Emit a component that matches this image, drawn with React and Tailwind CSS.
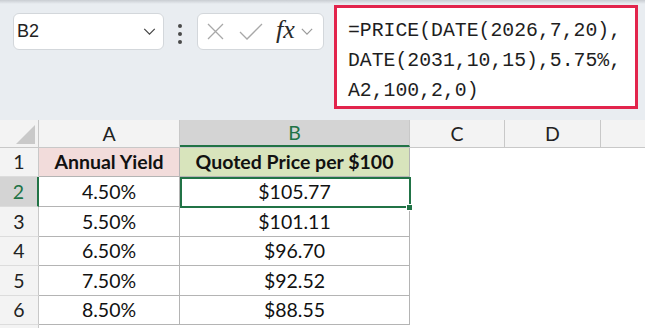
import React from 'react';

const ROWS = [
  { n: 1, a: 'Annual Yield', b: 'Quoted Price per $100', h: 'h-[29px]', head: true },
  { n: 2, a: '4.50%', b: '$105.77', h: 'h-[30px]', active: true },
  { n: 3, a: '5.50%', b: '$101.11', h: 'h-[30px]' },
  { n: 4, a: '6.50%', b: '$96.70', h: 'h-[29px]' },
  { n: 5, a: '7.50%', b: '$92.52', h: 'h-[30px]' },
  { n: 6, a: '8.50%', b: '$88.55', h: 'h-[29px]' },
];

function Chevron({ className }) {
  return (
    <svg viewBox="0 0 14 8" className={className} fill="none" stroke="currentColor" strokeWidth="1.4">
      <path d="M1 1l6 6 6-6" />
    </svg>
  );
}

function Toolbar() {
  return (
    <div className="relative h-[120px] bg-[#e9edf1] flex items-start">
      {/* faint shadow from the ribbon above */}
      <div className="absolute top-0 left-0 right-0 h-[4px] bg-gradient-to-b from-[#c9cdd2] to-[#e9edf1]" />

      {/* name box */}
      <div className="mt-[13px] ml-[13px] w-[151px] h-[37px] bg-white border border-[#d3d7db] rounded-[6px] flex items-center pl-[3px] pr-[7px]">
        <span className="flex-1 text-[18px] text-[#222] font-['Liberation_Sans',sans-serif]">B2</span>
        <Chevron className="w-[13px] h-[7px] text-[#444]" />
      </div>

      {/* more dots */}
      <div className="mt-[24px] ml-[13px] w-[6px] flex flex-col items-center gap-[4px]">
        <span className="w-[4px] h-[4px] rounded-full bg-[#4a4a4a]" />
        <span className="w-[4px] h-[4px] rounded-full bg-[#4a4a4a]" />
        <span className="w-[4px] h-[4px] rounded-full bg-[#4a4a4a]" />
      </div>

      {/* cancel / enter / fx */}
      <div className="mt-[13px] ml-[14px] w-[127px] h-[37px] bg-white border border-[#d3d7db] rounded-[6px] flex items-center pl-[9px]">
        <svg viewBox="0 0 17 17" className="w-[17px] h-[17px]" fill="none" stroke="#a8a8a8" strokeWidth="1.3">
          <path d="M1 1l15 15M16 1L1 16" />
        </svg>
        <svg viewBox="0 0 24 17" className="ml-[15px] w-[24px] h-[17px]" fill="none" stroke="#a8a8a8" strokeWidth="1.3">
          <path d="M1 9l7 7L23 1" />
        </svg>
        <span className="ml-[13px] text-[26px] leading-none italic text-[#2a2a2a] font-['Liberation_Serif',serif] -mt-[3px]">fx</span>
        <Chevron className="ml-[6px] w-[12px] h-[7px] text-[#9a9a9a]" />
      </div>

      {/* formula box */}
      <div className="mt-[5px] ml-[10px] w-[304px] h-[104px] bg-white border-[3px] border-[#e2244c] pl-[11px] pt-[8px] font-['Liberation_Mono',monospace] text-[19.8px] leading-[30px] text-[#1e1e1e]">
        <div>=PRICE(DATE(2026,7,20),</div>
        <div>DATE(2031,10,15),5.75%,</div>
        <div>A2,100,2,0)</div>
      </div>
    </div>
  );
}

function Sheet() {
  const cell = "flex items-center justify-center";
  return (
    <div className="relative font-['Lato',sans-serif] text-[19.5px] text-[#111]">
      {/* column headers */}
      <div className="flex h-[28px] bg-[#f3f3f3] border-b border-[#c8c8c8] text-[#222]">
        <div className="w-[39px] relative border-r border-[#c8c8c8]">
          <svg viewBox="0 0 20 20" className="absolute left-[16px] top-[5px] w-[19px] h-[19px]">
            <polygon points="20,0 20,20 0,20" fill="#c9c9c9" />
          </svg>
        </div>
        <div className={`w-[141px] border-r border-[#c8c8c8] ${cell}`}>A</div>
        <div className={`w-[230px] border-r border-[#c8c8c8] bg-[#d4d4d4] text-[#217346] border-b-2 border-b-[#217346] ${cell}`}>B</div>
        <div className={`w-[95px] border-r border-[#c8c8c8] ${cell}`}>C</div>
        <div className={`w-[96px] border-r border-[#c8c8c8] ${cell}`}>D</div>
        <div className="flex-1" />
      </div>

      {ROWS.map((r) => (
        <div key={r.n} className={`flex ${r.h}`}>
          <div className={`w-[39px] border-b border-[#dcdcdc] ${cell} ${r.active ? 'bg-[#d4d4d4] text-[#217346] border-r-2 border-r-[#217346]' : 'bg-[#f3f3f3] text-[#222] border-r border-r-[#c8c8c8]'}`}>
            {r.n}
          </div>
          <div className={`w-[141px] border-r border-b border-[#b4b4b4] ${cell} ${r.head ? 'bg-[#f2dcdb] font-bold' : 'bg-white'}`}>
            {r.a}
          </div>
          <div className={`w-[230px] border-r border-b border-[#b4b4b4] ${cell} ${r.head ? 'bg-[#d8e4bc] font-bold' : 'bg-white'}`}>
            {r.b}
          </div>
          <div className="flex-1 bg-white" />
        </div>
      ))}

      <div className="flex h-[10px]">
        <div className="w-[39px] bg-[#f3f3f3] border-r border-[#c8c8c8]" />
        <div className="flex-1 bg-white" />
      </div>

      {/* active cell B2 */}
      <div className="absolute left-[180px] top-[57px] w-[231px] h-[31px] border-2 border-[#217346] pointer-events-none" />
      <div className="absolute left-[406px] top-[84px] w-[7px] h-[7px] bg-[#217346] border border-white" />
    </div>
  );
}

export default function App() {
  return (
    <div className="w-[645px] h-[328px] overflow-hidden bg-white">
      <Toolbar />
      <Sheet />
    </div>
  );
}
